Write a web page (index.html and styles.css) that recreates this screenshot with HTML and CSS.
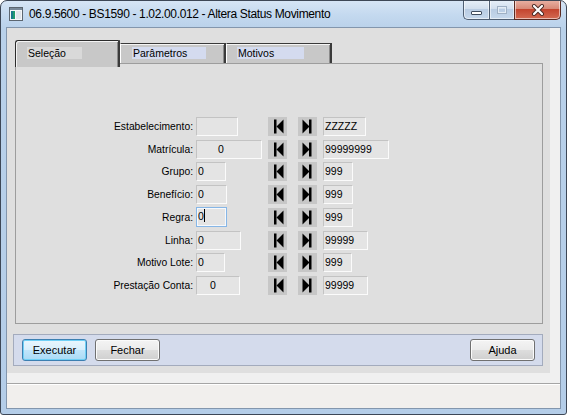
FILE: index.html
```html
<!DOCTYPE html>
<html lang="pt">
<head>
<meta charset="utf-8">
<title>Altera Status Movimento</title>
<link rel="stylesheet" href="styles.css">
</head>
<body>
<div class="window">
  <div class="titlebar">
    <svg class="appicon" viewBox="0 0 14 14" width="14" height="14">
      <rect x="0.5" y="0.5" width="13" height="13" fill="#f4f6f8" stroke="#5c6670"/>
      <rect x="1" y="1" width="12" height="2" fill="#7a8a9a"/>
      <rect x="2" y="4" width="4" height="8" fill="#1f9a6e"/>
      <rect x="2" y="4" width="2" height="8" fill="#167a8a"/>
      <rect x="7" y="4" width="5" height="8" fill="#dfe4ea"/>
    </svg>
    <span class="title">06.9.5600 - BS1590 - 1.02.00.012 - Altera Status Movimento</span>
    <div class="controls">
      <div class="ctl min"><span class="min-glyph"></span></div>
      <div class="ctl max"><span class="max-glyph"></span></div>
      <div class="ctl close">
        <svg viewBox="0 0 14 12" width="14" height="12">
          <path d="M3 2 L11 10 M11 2 L3 10" stroke="#4a2a25" stroke-width="4" stroke-linecap="round"/>
          <path d="M3 2 L11 10 M11 2 L3 10" stroke="#ffffff" stroke-width="2.2" stroke-linecap="round"/>
        </svg>
      </div>
    </div>
  </div>
  <div class="client">
    <div class="main">
      <div class="tabs">
        <div class="tab active"><span class="tab-lbl sel">Seleção</span></div>
        <div class="tab"><span class="tab-lbl par">Parâmetros</span></div>
        <div class="tab"><span class="tab-lbl mot">Motivos</span></div>
      </div>
      <div class="panel">
        <div class="form">
          <div class="flabel">Estabelecimento:</div>
          <div class="field w42"></div>
          <div class="nav"><svg viewBox="0 0 19 19" width="19" height="19"><rect x="6" y="2.5" width="2.5" height="14"/><polygon points="15.5,2.5 8.5,9.5 15.5,16.5"/></svg></div>
          <div class="nav"><svg viewBox="0 0 19 19" width="19" height="19"><polygon points="4.5,2.5 11.5,9.5 4.5,16.5"/><rect x="11" y="2.5" width="2.5" height="14"/></svg></div>
          <div class="field w43">ZZZZZ</div>

          <div class="flabel">Matrícula:</div>
          <div class="field w66 pad21">0</div>
          <div class="nav"><svg viewBox="0 0 19 19" width="19" height="19"><rect x="6" y="2.5" width="2.5" height="14"/><polygon points="15.5,2.5 8.5,9.5 15.5,16.5"/></svg></div>
          <div class="nav"><svg viewBox="0 0 19 19" width="19" height="19"><polygon points="4.5,2.5 11.5,9.5 4.5,16.5"/><rect x="11" y="2.5" width="2.5" height="14"/></svg></div>
          <div class="field w66">99999999</div>

          <div class="flabel">Grupo:</div>
          <div class="field w30">0</div>
          <div class="nav"><svg viewBox="0 0 19 19" width="19" height="19"><rect x="6" y="2.5" width="2.5" height="14"/><polygon points="15.5,2.5 8.5,9.5 15.5,16.5"/></svg></div>
          <div class="nav"><svg viewBox="0 0 19 19" width="19" height="19"><polygon points="4.5,2.5 11.5,9.5 4.5,16.5"/><rect x="11" y="2.5" width="2.5" height="14"/></svg></div>
          <div class="field w30">999</div>

          <div class="flabel">Benefício:</div>
          <div class="field w31">0</div>
          <div class="nav"><svg viewBox="0 0 19 19" width="19" height="19"><rect x="6" y="2.5" width="2.5" height="14"/><polygon points="15.5,2.5 8.5,9.5 15.5,16.5"/></svg></div>
          <div class="nav"><svg viewBox="0 0 19 19" width="19" height="19"><polygon points="4.5,2.5 11.5,9.5 4.5,16.5"/><rect x="11" y="2.5" width="2.5" height="14"/></svg></div>
          <div class="field w30">999</div>

          <div class="flabel">Regra:</div>
          <div class="field w31 focus">0<span class="caret"></span></div>
          <div class="nav"><svg viewBox="0 0 19 19" width="19" height="19"><rect x="6" y="2.5" width="2.5" height="14"/><polygon points="15.5,2.5 8.5,9.5 15.5,16.5"/></svg></div>
          <div class="nav"><svg viewBox="0 0 19 19" width="19" height="19"><polygon points="4.5,2.5 11.5,9.5 4.5,16.5"/><rect x="11" y="2.5" width="2.5" height="14"/></svg></div>
          <div class="field w30">999</div>

          <div class="flabel">Linha:</div>
          <div class="field w45">0</div>
          <div class="nav"><svg viewBox="0 0 19 19" width="19" height="19"><rect x="6" y="2.5" width="2.5" height="14"/><polygon points="15.5,2.5 8.5,9.5 15.5,16.5"/></svg></div>
          <div class="nav"><svg viewBox="0 0 19 19" width="19" height="19"><polygon points="4.5,2.5 11.5,9.5 4.5,16.5"/><rect x="11" y="2.5" width="2.5" height="14"/></svg></div>
          <div class="field w45">99999</div>

          <div class="flabel">Motivo Lote:</div>
          <div class="field w29">0</div>
          <div class="nav"><svg viewBox="0 0 19 19" width="19" height="19"><rect x="6" y="2.5" width="2.5" height="14"/><polygon points="15.5,2.5 8.5,9.5 15.5,16.5"/></svg></div>
          <div class="nav"><svg viewBox="0 0 19 19" width="19" height="19"><polygon points="4.5,2.5 11.5,9.5 4.5,16.5"/><rect x="11" y="2.5" width="2.5" height="14"/></svg></div>
          <div class="field w29">999</div>

          <div class="flabel">Prestação Conta:</div>
          <div class="field w44 pad13">0</div>
          <div class="nav"><svg viewBox="0 0 19 19" width="19" height="19"><rect x="6" y="2.5" width="2.5" height="14"/><polygon points="15.5,2.5 8.5,9.5 15.5,16.5"/></svg></div>
          <div class="nav"><svg viewBox="0 0 19 19" width="19" height="19"><polygon points="4.5,2.5 11.5,9.5 4.5,16.5"/><rect x="11" y="2.5" width="2.5" height="14"/></svg></div>
          <div class="field w45">99999</div>
        </div>
      </div>
      <div class="buttonbar">
        <button class="btn default">Executar</button>
        <button class="btn">Fechar</button>
        <button class="btn push-right">Ajuda</button>
      </div>
    </div>
    <div class="status"></div>
  </div>
</div>
</body>
</html>
```

FILE: styles.css
```css
* { box-sizing: border-box; }
html, body { margin: 0; padding: 0; }
body {
  width: 567px;
  height: 415px;
  overflow: hidden;
  background: #ffffff;
  font-family: "Liberation Sans", Arial, sans-serif;
}
.window {
  width: 567px;
  height: 415px;
  border: 1px solid #3d4756;
  border-radius: 7px 7px 3px 3px;
  background: linear-gradient(to bottom, #d6e5f5 0px, #c4d9ef 14px, #b9d1ea 28px, #b4cde8 100%);
  display: flex;
  flex-direction: column;
  overflow: hidden;
}
.titlebar {
  height: 27px;
  flex: none;
  display: flex;
  align-items: center;
  padding-left: 8px;
  padding-bottom: 2px;
}
.appicon { flex: none; }
.title {
  margin-left: 6px;
  font-size: 12px;
  letter-spacing: -0.35px;
  color: #000;
  white-space: nowrap;
}
.controls {
  margin-left: auto;
  margin-right: 5px;
  align-self: flex-start;
  margin-top: -1px;
  display: flex;
  height: 20px;
}
.ctl {
  height: 20px;
  border: 1px solid #4f5e72;
  border-top: none;
  display: flex;
  align-items: center;
  justify-content: center;
  box-shadow: inset 0 0 0 1px rgba(255,255,255,0.55);
}
.ctl.min {
  width: 26px;
  border-radius: 0 0 0 5px;
  border-right: none;
  background: linear-gradient(to bottom, #e8f0f9 0%, #d2dfee 45%, #b9cce3 50%, #c6d8ec 100%);
}
.ctl.max {
  width: 25px;
  border-right: none;
  background: linear-gradient(to bottom, #e8f0f9 0%, #d2dfee 45%, #b9cce3 50%, #c6d8ec 100%);
}
.ctl.close {
  width: 47px;
  border-radius: 0 0 5px 0;
  border-color: #5a2a22;
  background: linear-gradient(to bottom, #eab3a6 0%, #d88a78 45%, #c4452f 50%, #d36a52 100%);
}
.min-glyph {
  display: block;
  width: 11px;
  height: 4px;
  margin-top: 6px;
  background: #ffffff;
  border: 1px solid #3f4c5e;
  border-radius: 1px;
}
.max-glyph {
  display: block;
  width: 10px;
  height: 8px;
  border: 1px solid #9fb0c4;
  box-shadow: inset 0 0 0 1px #e4ecf5;
}

.client {
  margin: 0 6px 6px 6px;
  height: 380px;
  background: #f0f0f0;
  box-shadow: 0 0 0 1px #8396ad;
  display: flex;
  flex-direction: column;
}
.main {
  width: 543px;
  height: 345px;
  flex: none;
  background: #dfdfdf;
  padding: 12px 0 0 8px;
}
.tabs {
  display: flex;
  height: 23px;
}
.tab {
  height: 20px;
  margin-top: 3px;
  width: 106px;
  background: #c8c8c8;
  border-top: 1px solid #3a3a3a;
  border-left: 1px solid #ffffff;
  border-right: 2px solid #3a3a3a;
  box-shadow: inset 0 1px 0 #f4f4f4, inset -1px 0 0 #8a8a8a;
  padding-top: 3px;
}
.tab.active {
  width: 105px;
  height: 27px;
  margin-top: 0;
  border-left: 1px solid #2c2c2c;
  border-top: 1px solid #2c2c2c;
  border-radius: 3px 0 0 0;
  position: relative;
  z-index: 1;
  padding-top: 6px;
  box-shadow: inset 1px 1px 0 #f4f4f4, inset -1px 0 0 #8a8a8a;
}
.tab-lbl {
  display: block;
  margin-left: 11px;
  height: 12px;
  line-height: 12px;
  font-size: 10.5px;
  color: #000;
  padding-left: 1px;
  white-space: nowrap;
}
.tab-lbl.sel { width: 55px; background: #d9d9d9; }
.tab-lbl.par { width: 74px; background: #d4dbef; }
.tab-lbl.mot { width: 67px; background: #d4dbef; margin-left: 10px; }

.panel {
  width: 528px;
  height: 261px;
  border: 1px solid #9d9d9d;
  background: #dfdfdf;
}
.form {
  display: grid;
  grid-template-columns: 180px 72px 30px 25px 1fr;
  grid-auto-rows: 22.75px;
  align-items: center;
  padding-top: 51px;
}
.flabel {
  text-align: right;
  padding-right: 3px;
  font-size: 10.3px;
  color: #000;
  white-space: nowrap;
}
.field {
  height: 19px;
  border: 1px solid;
  border-color: #c3c3c3 #fbfbfb #fbfbfb #c3c3c3;
  background: #e4e4e4;
  font-size: 10.5px;
  line-height: 17px;
  padding-left: 1px;
  color: #000;
  white-space: nowrap;
}
.field.focus {
  border: 1px solid #86b6e6;
  box-shadow: inset 0 0 0 1px #f6f9fd;
  height: 20px;
}
.caret {
  display: inline-block;
  width: 1px;
  height: 13px;
  background: #000;
  vertical-align: -2px;
  margin-left: 0;
}
.pad21 { padding-left: 21px; }
.pad13 { padding-left: 13px; }
.w29 { width: 29px; }
.w30 { width: 30px; }
.w31 { width: 31px; }
.w42 { width: 42px; }
.w43 { width: 43px; }
.w44 { width: 44px; }
.w45 { width: 45px; }
.w66 { width: 66px; }
.nav {
  width: 19px;
  height: 19px;
  background: #c7c7c7;
}
.nav svg { display: block; fill: #000; }

.buttonbar {
  margin-top: 10px;
  margin-left: -2px;
  width: 530px;
  height: 32px;
  border: 1px solid #a3abbd;
  background: #d4dbec;
  display: flex;
  align-items: flex-start;
  padding: 4px 7px 0 8px;
}
.btn {
  width: 65px;
  height: 22px;
  margin: 0 8px 0 0;
  padding: 0;
  font-family: "Liberation Sans", Arial, sans-serif;
  font-size: 11px;
  color: #000;
  border: 1px solid #707070;
  border-radius: 3px;
  background: linear-gradient(to bottom, #f4f4f4 0%, #ebebeb 48%, #dddddd 52%, #cfcfcf 100%);
  box-shadow: inset 0 0 0 1px #fbfbfb;
}
.btn.default {
  border-color: #3c7fb1;
  background: linear-gradient(to bottom, #e9f6fd 0%, #d8effc 48%, #bfe5fb 52%, #a9daf5 100%);
  box-shadow: inset 0 0 0 1px #6fd0f6;
}
.btn.push-right { margin-left: auto; margin-right: 0; }

.status {
  margin-top: 10px;
  height: 25px;
  border-top: 1px solid #a5a5a5;
  background: #f1efed;
  box-shadow: inset 0 1px 0 #ffffff;
}
```
